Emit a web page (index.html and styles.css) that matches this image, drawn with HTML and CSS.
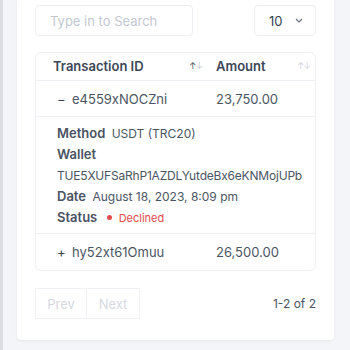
FILE: index.html
```html
<!DOCTYPE html>
<html lang="en">
<head>
    <meta charset="UTF-8">
    <meta name="viewport" content="width=device-width, initial-scale=1.0">
    <title>Transactions</title>
    <link rel="stylesheet" href="styles.css">
</head>
<body>
    <div class="side-strip"></div>
    <div class="page">
        <div class="card">
            <div class="toolbar">
                <input type="text" class="search" placeholder="Type in to Search">
                <div class="per-page">
                    <span>10</span>
                    <svg width="8" height="5" viewBox="0 0 8 5"><path d="M1 1l3 3 3-3" fill="none" stroke="#6b7280" stroke-width="1.2"/></svg>
                </div>
            </div>
            <table class="tx-table">
                <thead>
                    <tr>
                        <th>
                            <div class="th-inner">Transaction ID <span class="sort">↑<i>↓</i></span></div>
                        </th>
                        <th>
                            <div class="th-inner">Amount <span class="sort light">↑↓</span></div>
                        </th>
                    </tr>
                </thead>
                <tbody>
                    <tr>
                        <td><span class="toggle">−</span>e4559xNOCZni</td>
                        <td>23,750.00</td>
                    </tr>
                    <tr class="details-row">
                        <td colspan="2">
                            <div class="details">
                                <p><b>Method</b> USDT (TRC20)</p>
                                <p><b>Wallet</b></p>
                                <p class="wallet">TUE5XUFSaRhP1AZDLYutdeBx6eKNMojUPb</p>
                                <p><b>Date</b> August 18, 2023, 8:09 pm</p>
                                <p><b>Status</b> <span class="status declined">Declined</span></p>
                            </div>
                        </td>
                    </tr>
                    <tr>
                        <td><span class="toggle">+</span>hy52xt61Omuu</td>
                        <td>26,500.00</td>
                    </tr>
                </tbody>
            </table>
            <div class="pager">
                <div class="pager-buttons">
                    <button disabled>Prev</button>
                    <button disabled>Next</button>
                </div>
                <span class="count">1-2 of 2</span>
            </div>
        </div>
    </div>
</body>
</html>
```

FILE: styles.css
```css
* {
    margin: 0;
    padding: 0;
    box-sizing: border-box;
}
body {
    font-family: 'Inter', 'Noto Sans', sans-serif;
    background-color: #f4f5f8;
    color: #4b5563;
    display: flex;
    height: 350px;
    overflow: hidden;
}
.side-strip {
    width: 3px;
    flex-shrink: 0;
    background-color: #dcdee3;
}
.page {
    flex: 1;
    min-width: 0;
    padding: 0 16px 0 14px;
}
.card {
    background-color: #ffffff;
    padding: 5px 18px 22px 18px;
    height: 340px;
    border-radius: 0 0 4px 4px;
    box-shadow: 0 1px 3px rgba(0,0,0,0.06);
}
.toolbar {
    display: flex;
    justify-content: space-between;
    margin-bottom: 16px;
}
.search {
    width: 158px;
    height: 31px;
    padding: 0 14px;
    border: 1px solid #eceef2;
    border-radius: 4px;
    font-family: inherit;
    font-size: 13px;
    color: #4b5563;
}
.search::placeholder {
    color: #c3c8d1;
}
.per-page {
    width: 62px;
    height: 31px;
    border: 1px solid #eceef2;
    border-radius: 4px;
    display: flex;
    align-items: center;
    justify-content: space-between;
    padding: 0 12px 0 14px;
    font-size: 13px;
    color: #374151;
}
.tx-table {
    width: 100%;
    table-layout: fixed;
    border-collapse: separate;
    border-spacing: 0;
    border: 1px solid #eef0f3;
    border-radius: 6px;
}
.tx-table th {
    height: 28px;
    padding-bottom: 2px;
    text-align: left;
    font-weight: 600;
    font-size: 13px;
    color: #3d4757;
    border-bottom: 1px solid #eef0f3;
}
.tx-table th:first-child {
    width: 180px;
}
.th-inner {
    display: flex;
    justify-content: space-between;
    align-items: center;
    padding: 0 14px 0 17px;
}
.tx-table th:last-child .th-inner {
    padding: 0 5px 0 0;
}
.sort {
    font-size: 9px;
    color: #4b5563;
    font-weight: 400;
    letter-spacing: -1px;
}
.sort i {
    font-style: normal;
    color: #c5cad3;
}
.sort.light {
    color: #d1d5db;
}
.tx-table td {
    height: 36px;
    font-size: 13px;
    border-bottom: 1px solid #eef0f3;
    vertical-align: middle;
}
.tx-table td:first-child {
    padding-left: 21px;
}
.tx-table tbody tr:last-child td {
    border-bottom: none;
}
.toggle {
    display: inline-block;
    width: 15px;
    color: #374151;
}
.details-row td {
    height: auto;
}
.details {
    padding: 6px 0 4px 0;
}
.details p {
    font-size: 12px;
    line-height: 21px;
    color: #4b5563;
    white-space: nowrap;
}
.details b {
    font-size: 13px;
    font-weight: 600;
    color: #4a5263;
    margin-right: 3px;
}
.details .wallet {
    letter-spacing: -0.2px;
}
.status {
    font-size: 11px;
    margin-left: 3px;
}
.declined {
    color: #e04b4b;
}
.declined::before {
    content: '';
    display: inline-block;
    width: 5px;
    height: 5px;
    border-radius: 50%;
    background-color: #e04b4b;
    margin-right: 7px;
    vertical-align: 2px;
}
.pager {
    display: flex;
    justify-content: space-between;
    align-items: center;
    margin-top: 17px;
}
.pager-buttons {
    display: flex;
}
.pager-buttons button {
    width: 52px;
    height: 31px;
    background-color: #ffffff;
    border: 1px solid #f0f1f4;
    color: #d6d9df;
    font-family: inherit;
    font-size: 13px;
}
.pager-buttons button + button {
    border-left: none;
    width: 53px;
}
.count {
    font-size: 12px;
    color: #4b5563;
}
```
